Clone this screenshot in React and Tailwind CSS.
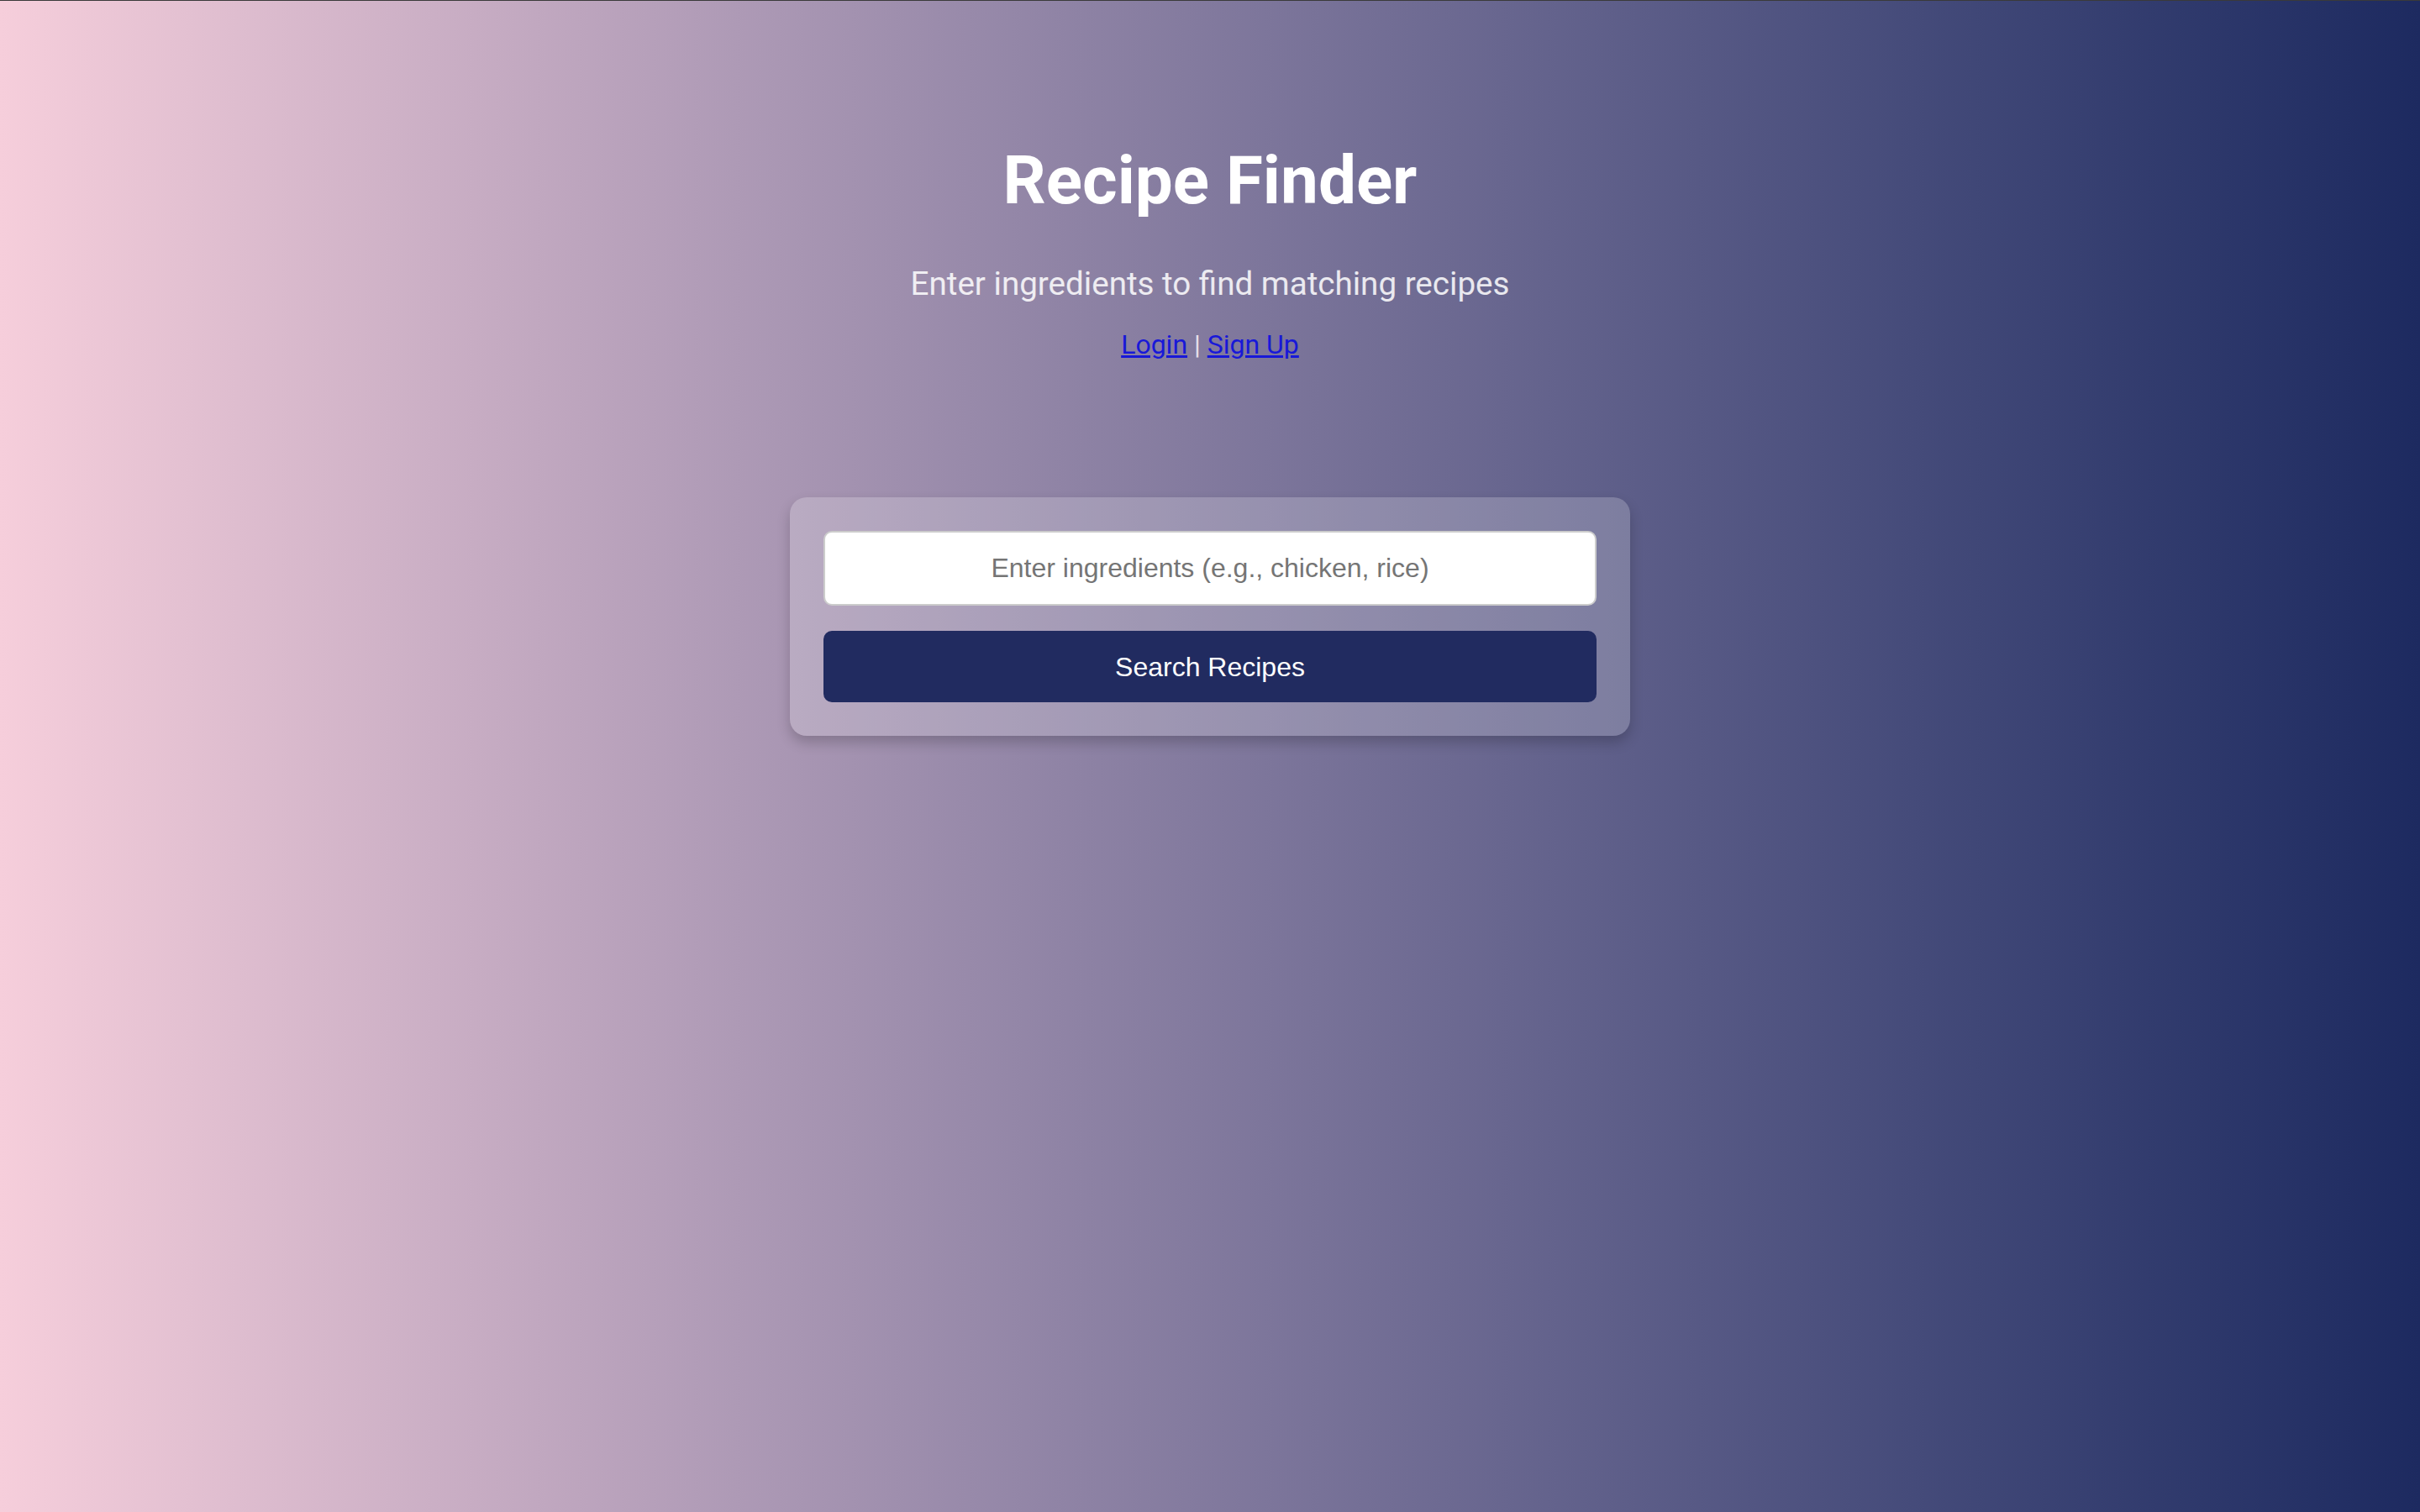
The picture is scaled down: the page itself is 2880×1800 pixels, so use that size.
export default function App() {
  return (
    <div className="min-h-screen w-full border-t border-[#3a3a3a] bg-gradient-to-r from-[#f6cedb] to-[#1d2a60] font-['Roboto',sans-serif]">
      {/* Header */}
      <header className="flex flex-col items-center pt-[167px] text-center">
        <h1 className="text-[80px] font-bold leading-[94px] text-white">Recipe Finder</h1>
        <p className="mt-[54px] text-[38.6px] leading-[44px] text-white/85">
          Enter ingredients to find matching recipes
        </p>
        <div className="mt-[31px] text-[32px] leading-[38px] text-[#e6e0ea]">
          <a href="#" className="text-[#1818d8] underline">Login</a>
          {' | '}
          <a href="#" className="text-[#1818d8] underline">Sign Up</a>
        </div>
      </header>

      {/* Search card */}
      <div className="mx-auto mt-[163px] w-[1000px] rounded-[20px] bg-white/20 p-[40px] shadow-[0_8px_16px_rgba(0,0,0,0.2)]">
        <input
          type="text"
          placeholder="Enter ingredients (e.g., chicken, rice)"
          className="block h-[89px] w-full rounded-[10px] border-2 border-[#cccccc] bg-white px-[24px] text-center font-['Liberation_Sans',Arial,sans-serif] text-[32px] text-[#333] placeholder:text-[#757575] outline-none"
        />
        <button className="mt-[30px] block h-[85px] w-full rounded-[10px] bg-[#212b60] font-['Liberation_Sans',Arial,sans-serif] text-[32px] text-white">
          Search Recipes
        </button>
      </div>
    </div>
  );
}
